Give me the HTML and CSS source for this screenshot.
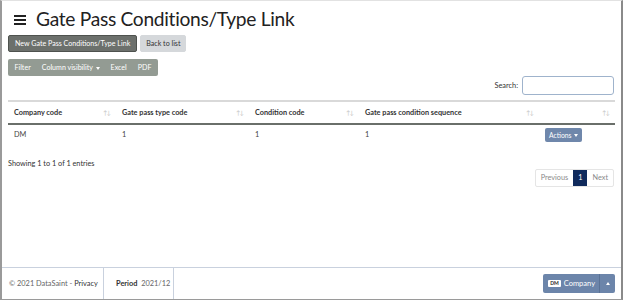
FILE: index.html
```html
<!DOCTYPE html>
<html>
<head>
<meta charset="utf-8">
<link rel="stylesheet" href="styles.css">
</head>
<body>
<div class="frame">
  <main class="main">
    <h1 class="title">
      <svg class="burger" width="12" height="10" viewBox="0 0 12 10"><rect x="0" y="0" width="12" height="2" fill="#222"/><rect x="0" y="4" width="12" height="2" fill="#222"/><rect x="0" y="8" width="12" height="2" fill="#222"/></svg>
      <span>Gate Pass Conditions/Type Link</span>
    </h1>
    <div class="actions-row">
      <button class="btn btn-dark">New Gate Pass Conditions/Type Link</button>
      <button class="btn btn-light">Back to list</button>
    </div>
    <div class="btn-group">
      <span class="gbtn">Filter</span>
      <span class="gbtn">Column visibility <span class="caret"></span></span>
      <span class="gbtn">Excel</span>
      <span class="gbtn">PDF</span>
    </div>
    <div class="search-row">
      <label class="search-label">Search:</label>
      <input class="search-input" type="text">
    </div>
    <table class="grid">
      <thead>
        <tr>
          <th class="c1">Company code<span class="sort">↑↓</span></th>
          <th class="c2">Gate pass type code<span class="sort">↑↓</span></th>
          <th class="c3">Condition code<span class="sort">↑↓</span></th>
          <th class="c4">Gate pass condition sequence<span class="sort">↑↓</span></th>
          <th class="c5"><span class="sort">↑↓</span></th>
        </tr>
      </thead>
      <tbody>
        <tr>
          <td>DM</td>
          <td>1</td>
          <td>1</td>
          <td>1</td>
          <td class="act"><span class="btn-actions">Actions <span class="caret"></span></span></td>
        </tr>
      </tbody>
    </table>
    <div class="info">Showing 1 to 1 of 1 entries</div>
    <div class="pager-row">
      <div class="pager">
        <span class="pg pg-dis">Previous</span>
        <span class="pg pg-act">1</span>
        <span class="pg pg-dis">Next</span>
      </div>
    </div>
  </main>
  <footer class="footer">
    <div class="fsec f1"><span>© 2021 DataSaint - <span class="priv">Privacy</span></span></div>
    <div class="fsec f2"><span><b>Period</b>&nbsp;&nbsp;2021/12</span></div>
    <div class="fspace"></div>
    <div class="company">
      <span class="cmain"><span class="dm">DM</span> Company</span>
      <span class="csplit"><span class="caret up"></span></span>
    </div>
  </footer>
</div>
</body>
</html>
```
FILE: styles.css
```css
* { box-sizing: border-box; }
html, body { margin: 0; padding: 0; background: #fff; }
body { font-family: "Lato", "Open Sans", sans-serif; color: #333; width: 624px; height: 301px; overflow: hidden; }
.frame {
  width: 623px; height: 300px;
  border-left: 2px solid #9a9a9a;
  border-top: 1px solid #e2e2e2;
  border-right: 2px solid #8a8a8a;
  border-bottom: 1px solid #9a9a9a;
  display: flex; flex-direction: column;
}
.main { flex: 1; padding: 0 6px 0 6px; }
.title { margin: 5px 0 0 6px; display: flex; align-items: center; gap: 10px; font-weight: 400; font-size: 19.2px; letter-spacing: -0.3px; line-height: 26px; color: #222; }
.burger { margin-top: 1px; }
.actions-row { display: flex; gap: 3px; margin-top: 3px; }
.btn { font-family: inherit; font-size: 7.1px; height: 17px; padding: 0 6px; border-radius: 2px; cursor: pointer; line-height: 15px; }
.btn-dark { background: #6c706c; color: #fff; border: 1px solid #4e524e; }
.btn-light { background: #d5d8db; color: #333; border: 1px solid #d5d8db; padding: 0 5px; }
.btn-group { display: inline-flex; background: #939b93; border-radius: 2px; margin-top: 7px; height: 17px; align-items: center; padding: 0 1px; }
.gbtn { color: #fff; font-size: 7.1px; padding: 0 5.5px; line-height: 17px; }
.caret { display: inline-block; width: 0; height: 0; border-left: 2.5px solid transparent; border-right: 2.5px solid transparent; border-top: 3px solid currentColor; vertical-align: middle; margin-left: 1px; }
.caret.up { border-top: none; border-bottom: 3px solid currentColor; }
.search-row { display: flex; justify-content: flex-end; align-items: center; gap: 4px; margin-top: 0; }
.search-label { font-size: 7.4px; color: #333; }
.search-input { width: 92px; height: 19px; border: 1px solid #9fb3cc; border-radius: 3px; margin-right: 1px; }
.grid { width: 100%; border-collapse: collapse; margin-top: 5px; font-size: 7.3px; }
.grid th { text-align: left; font-weight: 700; color: #333; border-top: 2px solid #d9d9d9; border-bottom: 2px solid #6a6f6a; padding: 0 6px; height: 23px; position: relative; }
.grid td { padding: 0 6px; color: #444; height: 20px; }
.sort { position: absolute; right: 6px; top: 7px; color: #c4c4c4; font-weight: 400; font-size: 6px; letter-spacing: -1px; }
.c1 { width: 108px; } .c2 { width: 133px; } .c3 { width: 110px; } .c4 { width: 180px; }
.act { text-align: left; padding-left: 6px !important; }
.btn-actions { display: inline-block; background: #6f87ab; color: #fff; font-size: 6.8px; padding: 0 4px; height: 14px; line-height: 14px; border-radius: 2px; }
.info { font-size: 7.3px; color: #333; margin-top: 15px; }
.pager-row { display: flex; justify-content: flex-end; margin-top: 1px; }
.pager { display: flex; border: 1px solid #e5e5e5; border-radius: 2px; height: 18px; margin-right: 1px; }
.pg { font-size: 7.3px; line-height: 16px; padding: 0 5px; }
.pg-dis { color: #8a8a8a; }
.pg-act { background: #0f2a5c; color: #fff; }
.footer { height: 32px; border-top: 1px solid #c9d1de; display: flex; align-items: center; font-size: 7.4px; color: #666; }
.fsec { height: 100%; display: flex; align-items: center; border-right: 1px solid #c9d1de; }
.f1 { width: 102px; padding-left: 7px; }
.priv { color: #333; }
.f2 { width: 70px; padding-left: 12px; color: #666; }
.f2 b { color: #333; }
.fspace { flex: 1; }
.company { display: flex; height: 19px; background: #6c85aa; border-radius: 2px; color: #fff; margin-right: 6px; }
.cmain { display: flex; align-items: center; padding: 0 4px 0 5px; font-size: 7.5px; gap: 3px; border-right: 1px solid #5a7296; }
.dm { background: #fff; color: #222; font-size: 5px; font-weight: 700; padding: 0 2px; line-height: 7px; border-radius: 1px; }
.csplit { display: flex; align-items: center; padding: 0 5px; }
```
